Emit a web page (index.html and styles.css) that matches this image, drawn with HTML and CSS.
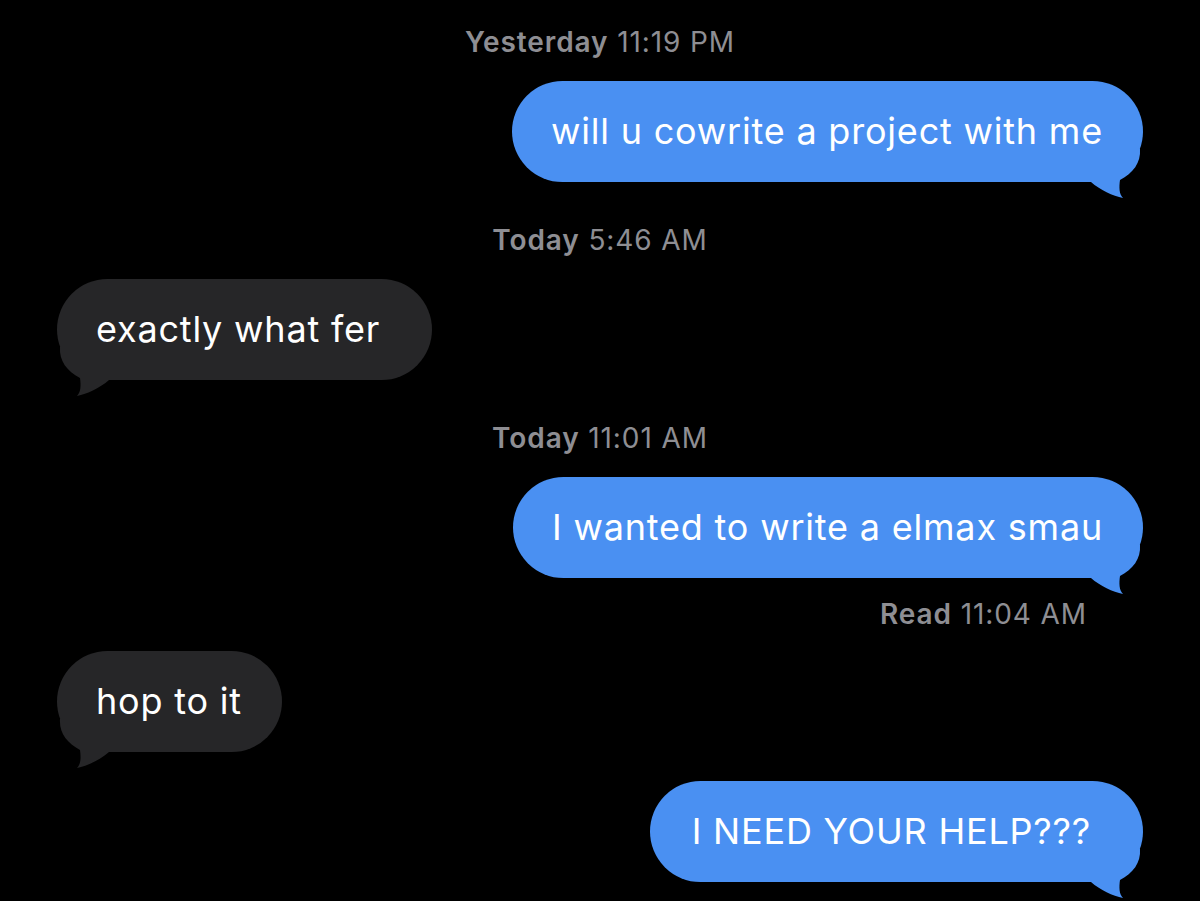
FILE: index.html
```html
<!DOCTYPE html>
<html lang="en">
  <head>
    <meta charset="UTF-8" />
    <meta name="viewport" content="width=device-width, initial-scale=1.0" />
    <title>Messages</title>
    <link rel="stylesheet" href="styles.css">
  </head>
  <body>
    <div class="chat">
      <!-- bubble above the fold, only its tail shows -->
      <div class="bubble them offscreen">
        <svg class="tail" viewBox="0 0 60 50"><path d="M0 0 L57 0 C58 14 50 24 37 31 C36 38 36 45 40 49 C30 47 17 41 8 33 L0 33 Z" /></svg>
      </div>

      <div class="stamp"><b>Yesterday</b> 11:19 PM</div>
      <div class="bubble me">
        will u cowrite a project with me
        <svg class="tail" viewBox="0 0 60 50"><path d="M0 0 L57 0 C58 14 50 24 37 31 C36 38 36 45 40 49 C30 47 17 41 8 33 L0 33 Z" /></svg>
      </div>

      <div class="stamp"><b>Today</b> 5:46 AM</div>
      <div class="bubble them wide">
        exactly what fer
        <svg class="tail" viewBox="0 0 60 50"><path d="M0 0 L57 0 C58 14 50 24 37 31 C36 38 36 45 40 49 C30 47 17 41 8 33 L0 33 Z" /></svg>
      </div>

      <div class="stamp"><b>Today</b> 11:01 AM</div>
      <div class="bubble me">
        I wanted to write a elmax smau
        <svg class="tail" viewBox="0 0 60 50"><path d="M0 0 L57 0 C58 14 50 24 37 31 C36 38 36 45 40 49 C30 47 17 41 8 33 L0 33 Z" /></svg>
      </div>
      <div class="read"><b>Read</b> 11:04 AM</div>

      <div class="bubble them">
        hop to it
        <svg class="tail" viewBox="0 0 60 50"><path d="M0 0 L57 0 C58 14 50 24 37 31 C36 38 36 45 40 49 C30 47 17 41 8 33 L0 33 Z" /></svg>
      </div>

      <div class="bubble me wide last">
        I NEED YOUR HELP???
        <svg class="tail" viewBox="0 0 60 50"><path d="M0 0 L57 0 C58 14 50 24 37 31 C36 38 36 45 40 49 C30 47 17 41 8 33 L0 33 Z" /></svg>
      </div>
    </div>
  </body>
</html>
```

FILE: styles.css
```css
body {
  margin: 0;
  background-color: #000; /* dark mode */
  font-family: Inter, "Noto Sans", sans-serif;
  overflow: hidden;
}
.chat {
  display: flex;
  flex-direction: column;
  padding: 0 57px;
  height: 901px;
}
.stamp,
.read {
  font-size: 28px;
  line-height: 30px;
  letter-spacing: 0.9px;
  color: #8e8e93;
}
.stamp {
  text-align: center;
  margin: 43px 0 24px;
}
.stamp b,
.read b {
  font-weight: 600;
}
.read {
  align-self: flex-end;
  margin: 21px 56px 22px 0;
}
.bubble {
  position: relative;
  padding: 29px 40px 29px 39px;
  font-size: 36px;
  line-height: 43px;
  letter-spacing: 0.8px;
  color: #fff;
  border-radius: 51px;
  white-space: nowrap;
  flex-shrink: 0;
}
.bubble .tail {
  position: absolute;
  bottom: -17px;
  width: 60px;
  height: 50px;
}
.me {
  align-self: flex-end;
  background-color: #4a90f2; /* blue bubble */
}
.me .tail {
  right: 0;
  fill: #4a90f2;
}
.them {
  align-self: flex-start;
  background-color: #262628; /* grey bubble */
}
.them .tail {
  left: 0;
  fill: #262628;
  transform: scaleX(-1);
}
.wide {
  padding-right: 52px;
}
.me.wide {
  padding-left: 42px;
}
.offscreen {
  margin-top: -117px;
  width: 200px;
  height: 43px;
}
.last {
  margin-top: 29px;
}
```
